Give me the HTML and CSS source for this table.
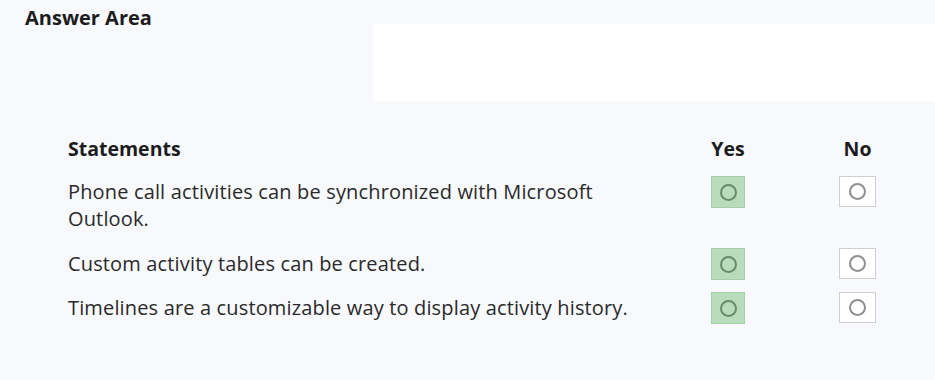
FILE: index.html
```html
<!DOCTYPE html>
<html>
<head>
<meta charset="utf-8">
<link rel="stylesheet" href="styles.css">
</head>
<body>
<div class="top">
  <div class="title">Answer Area</div>
  <div class="blank"></div>
</div>
<div class="table">
  <div class="hdr">Statements</div>
  <div class="hdr center">Yes</div>
  <div></div>
  <div class="hdr center">No</div>

  <div class="stmt first">Phone call activities can be synchronized with Microsoft<br>Outlook.</div>
  <div class="box yes"><span class="ring"></span></div>
  <div></div>
  <div class="box no"><span class="ring"></span></div>

  <div class="stmt">Custom activity tables can be created.</div>
  <div class="box yes"><span class="ring"></span></div>
  <div></div>
  <div class="box no"><span class="ring"></span></div>

  <div class="stmt">Timelines are a customizable way to display activity history.</div>
  <div class="box yes"><span class="ring"></span></div>
  <div></div>
  <div class="box no"><span class="ring"></span></div>
</div>
</body>
</html>
```
FILE: styles.css
```css
html, body {
  margin: 0;
  padding: 0;
  background: #f8f9fd;
  font-family: "Open Sans", "Noto Sans", sans-serif;
  color: #2a2a2a;
}
.top {
  display: flex;
  align-items: flex-start;
}
.title {
  width: 348px;
  padding: 5px 0 0 25px;
  font-weight: 700;
  font-size: 20px;
  line-height: 26px;
  color: #1c1c1c;
}
.blank {
  flex: 1;
  margin-top: 24px;
  height: 77px;
  background: #ffffff;
}
.table {
  display: grid;
  grid-template-columns: 643px 34px 94px 37px;
  row-gap: 12px;
  padding-left: 68px;
  margin-top: 36px;
  align-items: start;
}
.hdr {
  font-weight: 700;
  font-size: 19.5px;
  line-height: 24px;
  color: #1c1c1c;
  margin-bottom: 3px;
}
.center {
  text-align: center;
  justify-self: center;
}
.stmt {
  font-size: 20px;
  line-height: 27px;
  padding-top: 2px;
  letter-spacing: 0.15px;
}
.stmt.first {
  padding-bottom: 4px;
}
.box {
  height: 32px;
  display: flex;
  align-items: center;
  justify-content: center;
  box-sizing: border-box;
}
.yes {
  background: #b9dcbb;
  border: 1px solid #a6cfa8;
}
.no {
  background: #ffffff;
  border: 1px solid #cfcfcf;
  height: 31px;
}
.ring {
  width: 13px;
  height: 13px;
  border-radius: 50%;
  border: 2px solid #6b8a6c;
}
.no .ring {
  border-color: #8e8e8e;
}
```
